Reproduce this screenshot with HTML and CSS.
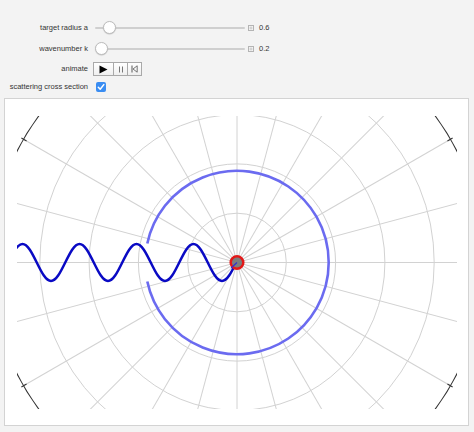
FILE: index.html
```html
<!DOCTYPE html>
<html>
<head>
<meta charset="utf-8">
<link rel="stylesheet" href="styles.css">
</head>
<body>
<div class="app">
  <div class="controls">
    <div class="label">target radius a</div>
    <div class="ctl">
      <div class="slider"><div class="thumb" style="left:8px"></div></div>
      <svg class="plus" width="6" height="6" viewBox="0 0 6 6"><rect x="0.5" y="0.5" width="5" height="5" fill="none" stroke="#b4b4b4"/><path d="M3 1.5V4.5M1.5 3H4.5" stroke="#c8c8c8"/></svg>
      <span class="val">0.6</span>
    </div>

    <div class="label">wavenumber k</div>
    <div class="ctl">
      <div class="slider"><div class="thumb" style="left:0px"></div></div>
      <svg class="plus" width="6" height="6" viewBox="0 0 6 6"><rect x="0.5" y="0.5" width="5" height="5" fill="none" stroke="#b4b4b4"/><path d="M3 1.5V4.5M1.5 3H4.5" stroke="#c8c8c8"/></svg>
      <span class="val">0.2</span>
    </div>

    <div class="label">animate</div>
    <div class="ctl">
      <div class="buttons">
        <div class="btn play"><svg width="9" height="9" viewBox="0 0 9 9"><path d="M0.5 0.5L8.5 4.5L0.5 8.5Z" fill="#000"/></svg></div>
        <div class="btn"><svg width="6" height="7" viewBox="0 0 6 7"><path d="M1.5 0.5V6.5M4.5 0.5V6.5" stroke="#777" stroke-width="1"/></svg></div>
        <div class="btn"><svg width="7" height="8" viewBox="0 0 7 8"><path d="M1 0.5V7.5" stroke="#666" stroke-width="1.1"/><path d="M6.2 0.8L2 4L6.2 7.2Z" fill="none" stroke="#666" stroke-width="0.9"/></svg></div>
      </div>
    </div>

    <div class="label">scattering cross section</div>
    <div class="ctl">
      <div class="check"><svg width="10" height="10" viewBox="0 0 10 10"><path d="M2.3 5.2L4.2 7.2L7.8 2.6" fill="none" stroke="#fff" stroke-width="1.5" stroke-linecap="round" stroke-linejoin="round"/></svg></div>
    </div>
  </div>

  <div class="plot">
    <svg class="graph" width="463" height="326" viewBox="5 99 463 326">
      <defs>
        <clipPath id="pr"><rect x="17" y="116" width="440" height="293"/></clipPath>
        <clipPath id="wv"><rect x="17" y="200" width="220" height="120"/></clipPath>
      </defs>
      <g clip-path="url(#pr)">
        <g transform="translate(237 262.5)" fill="none" stroke="#d2d2d2" stroke-width="1">
          <circle r="49.3"/>
          <circle r="98.6"/>
          <circle r="147.9"/>
          <circle r="197.2"/>
          <line x1="-246.5" y1="0" x2="246.5" y2="0"/>
          <line x1="-246.5" y1="0" x2="246.5" y2="0" transform="rotate(15)"/>
          <line x1="-246.5" y1="0" x2="246.5" y2="0" transform="rotate(30)"/>
          <line x1="-246.5" y1="0" x2="246.5" y2="0" transform="rotate(45)"/>
          <line x1="-246.5" y1="0" x2="246.5" y2="0" transform="rotate(60)"/>
          <line x1="-246.5" y1="0" x2="246.5" y2="0" transform="rotate(75)"/>
          <line x1="-246.5" y1="0" x2="246.5" y2="0" transform="rotate(90)"/>
          <line x1="-246.5" y1="0" x2="246.5" y2="0" transform="rotate(105)"/>
          <line x1="-246.5" y1="0" x2="246.5" y2="0" transform="rotate(120)"/>
          <line x1="-246.5" y1="0" x2="246.5" y2="0" transform="rotate(135)"/>
          <line x1="-246.5" y1="0" x2="246.5" y2="0" transform="rotate(150)"/>
          <line x1="-246.5" y1="0" x2="246.5" y2="0" transform="rotate(165)"/>
          <circle r="246.5" stroke="#333" stroke-width="1.1"/>
          <g stroke="#333" stroke-width="1">
            <line x1="243" y1="0" x2="249" y2="0" transform="rotate(30)"/>
            <line x1="243" y1="0" x2="249" y2="0" transform="rotate(150)"/>
            <line x1="243" y1="0" x2="249" y2="0" transform="rotate(210)"/>
            <line x1="243" y1="0" x2="249" y2="0" transform="rotate(330)"/>
          </g>
        </g>
      </g>
      <path d="M147.3 243.43A91.7 91.7 0 1 1 147.3 281.57" fill="none" stroke="#6b6bf0" stroke-width="2.6"/>
      <path clip-path="url(#wv)" fill="none" stroke="#0a0ac4" stroke-width="2.5" stroke-linecap="round"
        d="M8.25 262.5c4.648-9.477 9.093-18.5 14.25-18.5
           c5.157 0 9.602 9.023 14.25 18.5c4.648 9.477 9.093 18.5 14.25 18.5c5.157 0 9.602-9.023 14.25-18.5c4.648-9.477 9.093-18.5 14.25-18.5
           c5.157 0 9.602 9.023 14.25 18.5c4.648 9.477 9.093 18.5 14.25 18.5c5.157 0 9.602-9.023 14.25-18.5c4.648-9.477 9.093-18.5 14.25-18.5
           c5.157 0 9.602 9.023 14.25 18.5c4.648 9.477 9.093 18.5 14.25 18.5c5.157 0 9.602-9.023 14.25-18.5c4.648-9.477 9.093-18.5 14.25-18.5
           c5.157 0 9.602 9.023 14.25 18.5c4.648 9.477 9.093 18.5 14.25 18.5c5.157 0 9.602-9.023 14.25-18.5c4.648-9.477 9.093-18.5 14.25-18.5"/>
      <circle cx="237" cy="262.5" r="6.3" fill="#7c7c7c" stroke="#e21818" stroke-width="2.5"/>
      <line x1="231" y1="268" x2="237" y2="262.5" stroke="#3030d0" stroke-width="1.2"/>
    </svg>
  </div>
</div>
</body>
</html>
```

FILE: styles.css
```css
html, body {
  margin: 0;
  padding: 0;
  background: #f3f3f3;
}

.app {
  width: 474px;
  height: 432px;
  font-family: "Liberation Sans", Arial, sans-serif;
  color: #333;
}

.controls {
  display: grid;
  grid-template-columns: 88px auto;
  grid-template-rows: 21px 21px 20px 15px;
  column-gap: 5px;
  align-items: center;
  padding-top: 17px;
}

.label {
  font-size: 7.5px;
  text-align: right;
  white-space: nowrap;
  line-height: 1;
}

.ctl {
  display: flex;
  align-items: center;
}

.slider {
  position: relative;
  width: 150px;
  height: 13px;
  margin-left: 2px;
  display: flex;
  align-items: center;
}

.slider::before {
  content: "";
  display: block;
  width: 100%;
  height: 2px;
  border-radius: 1px;
  background: #cfcfcf;
}

.thumb {
  position: absolute;
  top: 0;
  width: 13px;
  height: 13px;
  box-sizing: border-box;
  border-radius: 50%;
  background: #fff;
  border: 1px solid #bdbdbd;
  box-shadow: 0 0.5px 1px rgba(0, 0, 0, 0.2);
}

.plus {
  display: block;
  margin-left: 3px;
}

.val {
  font-size: 7.5px;
  margin-left: 5px;
  line-height: 1;
}

.buttons {
  display: flex;
  height: 12px;
  border: 1px solid #a9a9a9;
  background: linear-gradient(#ffffff, #efefef);
}

.btn {
  display: flex;
  align-items: center;
  justify-content: center;
  width: 13px;
  height: 12px;
  border-left: 1px solid #a9a9a9;
}

.btn.play {
  width: 19px;
  border-left: none;
}

.check {
  width: 10px;
  height: 10px;
  margin-left: 3px;
  border-radius: 2px;
  background: #3a8df2;
  display: flex;
}

.plot {
  margin: 4px 0 0 4px;
  width: 465px;
  height: 328px;
  box-sizing: border-box;
  border: 1px solid #d3d3d3;
  background: #fff;
}

.graph {
  display: block;
}
```
